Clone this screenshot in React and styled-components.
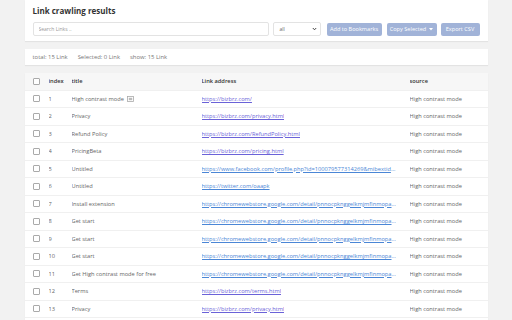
import React from 'react';
import styled, { createGlobalStyle } from 'styled-components';

const GlobalStyle = createGlobalStyle`
  body {
    margin: 0;
    background: #f2f2f2;
    font-family: "Open Sans", "Noto Sans", Arial, sans-serif;
  }
`;

const Page = styled.div`
  width: 463px;
  margin: 0 auto;
  display: flex;
  flex-direction: column;
  gap: 8px;
`;

const Card = styled.div`
  background: #fff;
  box-shadow: 0 1px 1px rgba(0, 0, 0, 0.06);
`;

const HeadCard = styled(Card)`
  padding: 5px 8px 5px 8px;
`;

const Title = styled.h1`
  margin: 0 0 5px 0;
  font-size: 8px;
  font-weight: 700;
  color: #333;
  line-height: 12px;
`;

const Toolbar = styled.div`
  display: flex;
  align-items: center;
  & > * { flex-shrink: 0; }
`;

const Search = styled.input`
  box-sizing: border-box;
  width: 236px;
  height: 14px;
  border: 1px solid #e3e3e3;
  border-radius: 2px;
  padding: 0 5px;
  font-size: 5px;
  font-family: inherit;
  outline: none;
  &::placeholder { color: #999; }
`;

const Select = styled.div`
  box-sizing: border-box;
  width: 48px;
  height: 14px;
  margin-left: 4px;
  border: 1px solid #e3e3e3;
  border-radius: 2px;
  padding: 0 3px 0 6px;
  display: flex;
  align-items: center;
  justify-content: space-between;
  font-size: 5px;
  color: #666;
`;

const Button = styled.button`
  box-sizing: border-box;
  width: ${p => p.$w}px;
  height: 13px;
  margin-left: ${p => p.$gap || 5}px;
  padding: 0;
  border: none;
  border-radius: 2px;
  background: #a1b3d8;
  color: #fff;
  font-family: inherit;
  font-size: 5.6px;
  white-space: nowrap;
  display: flex;
  align-items: center;
  justify-content: center;
  gap: 3px;
`;

const Stats = styled(Card)`
  height: 16px;
  padding: 0 8px;
  display: flex;
  align-items: center;
  gap: 10px;
  font-size: 5.9px;
  color: #777;
`;

const Row = styled.div`
  display: grid;
  grid-template-columns: 16px 23px 130px 208px 1fr;
  padding-left: 8px;
  height: 17.5px;
  align-items: center;
  background: ${p => (p.$head ? '#f7f7f7' : '#fff')};
  border-bottom: 1px solid #f0f0f0;
  box-sizing: border-box;
  font-size: 5.7px;
  color: ${p => (p.$head ? '#333' : '#666')};
  font-weight: ${p => (p.$head ? 600 : 400)};
`;

const Cell = styled.div`
  min-width: 0;
  white-space: nowrap;
  overflow: hidden;
  text-overflow: ellipsis;
  padding-right: ${p => p.$pr || 0}px;
  display: flex;
  align-items: center;
  gap: 3px;
`;

const LinkText = styled.a`
  color: ${p => (p.$visited ? '#6a62d8' : '#4a86d6')};
  text-decoration: underline;
  overflow: hidden;
  text-overflow: ellipsis;
  white-space: nowrap;
  display: block;
  min-width: 0;
`;

const Box = styled.span`
  width: 5px;
  height: 5px;
  border: 1px solid #aaa;
  border-radius: 1px;
  display: inline-block;
  background: #fff;
`;

const Favicon = () => (
  <svg width="7" height="6" viewBox="0 0 7 6">
    <rect x="0.5" y="0.5" width="6" height="5" fill="none" stroke="#aaa" strokeWidth="0.8" />
    <rect x="1.8" y="1.8" width="3.4" height="2.4" fill="#bbb" />
  </svg>
);

const chrome = 'https://chromewebstore.google.com/detail/pnnocpknggelkmjmfinmopacbkdnmhgj';

const rows = [
  ['High contrast mode', 'https://bizbrz.com/', true, true],
  ['Privacy', 'https://bizbrz.com/privacy.html', true],
  ['Refund Policy', 'https://bizbrz.com/RefundPolicy.html', true],
  ['PricingBeta', 'https://bizbrz.com/pricing.html', true],
  ['Untitled', 'https://www.facebook.com/profile.php?id=100079577314269&mibextid=ZbWKwL', false],
  ['Untitled', 'https://twitter.com/oaapk', false],
  ['Install extension', chrome, false],
  ['Get start', chrome, false],
  ['Get start', chrome, false],
  ['Get start', chrome, false],
  ['Get High contrast mode for free', chrome, false],
  ['Terms', 'https://bizbrz.com/terms.html', true],
  ['Privacy', 'https://bizbrz.com/privacy.html', true],
  ['Refund Policy', 'https://bizbrz.com/RefundPolicy.html', true],
  ['Contact', 'https://bizbrz.com/contact.html', true],
];

export default function App() {
  return (
    <>
      <GlobalStyle />
      <Page>
        <HeadCard>
          <Title>Link crawling results</Title>
          <Toolbar>
            <Search placeholder="Search Links .." />
            <Select>
              <span>all</span>
              <svg width="5" height="4" viewBox="0 0 5 4">
                <path d="M0.8 1 L2.5 2.8 L4.2 1" fill="none" stroke="#333" strokeWidth="0.9" />
              </svg>
            </Select>
            <Button $gap={6} $w={55}>Add to Bookmarks</Button>
            <Button $w={50}>
              Copy Selected
              <svg width="4" height="3" viewBox="0 0 4 3"><path d="M0 0 H4 L2 2.5 Z" fill="#fff" /></svg>
            </Button>
            <Button $gap={4} $w={39}>Export CSV</Button>
          </Toolbar>
        </HeadCard>
        <Stats>
          <span>total: 15 Link</span>
          <span>Selected: 0 Link</span>
          <span>show: 15 Link</span>
        </Stats>
        <Card>
          <Row $head>
            <Cell><Box /></Cell>
            <Cell>index</Cell>
            <Cell>title</Cell>
            <Cell>Link address</Cell>
            <Cell>source</Cell>
          </Row>
          {rows.map(([title, href, visited, icon], i) => (
            <Row key={i}>
              <Cell><Box /></Cell>
              <Cell>{i + 1}</Cell>
              <Cell>{title}{icon && <Favicon />}</Cell>
              <Cell $pr={12}><LinkText href={href} $visited={visited}>{href}</LinkText></Cell>
              <Cell>High contrast mode</Cell>
            </Row>
          ))}
        </Card>
      </Page>
    </>
  );
}
